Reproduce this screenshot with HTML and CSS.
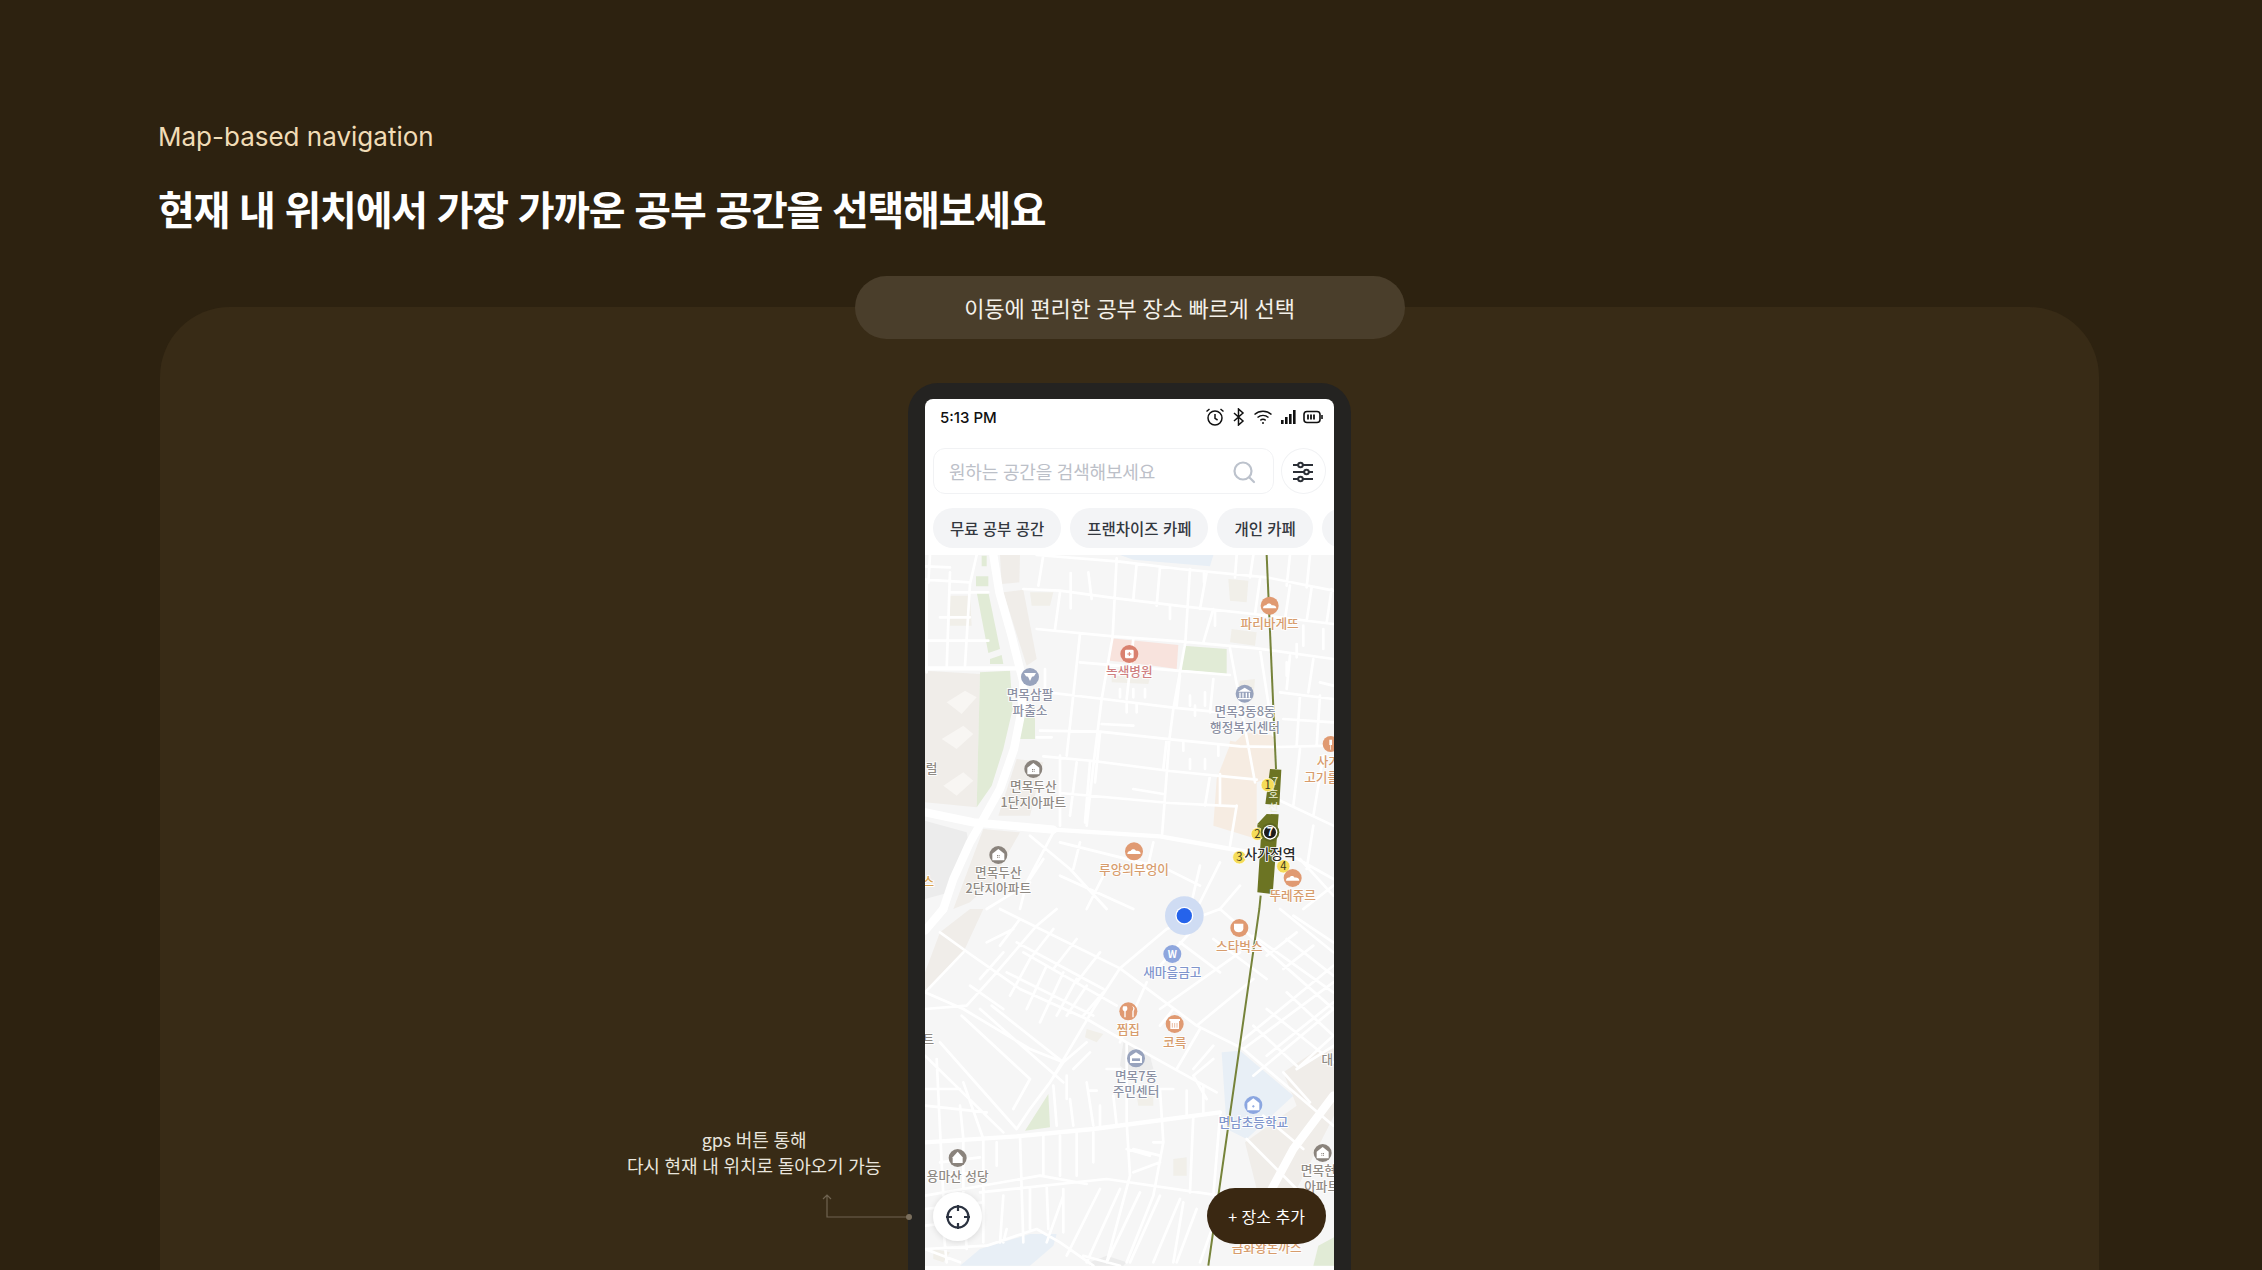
FILE: index.html
```html
<!DOCTYPE html>
<html lang="ko">
<head>
    <meta charset="UTF-8">
    <meta name="viewport" content="width=device-width, initial-scale=1.0">
    <title>Map-based navigation</title>
    <link rel="stylesheet" href="styles.css">
</head>
<body>

    <header class="hero">
        <p class="eyebrow">Map-based navigation</p>
        <h1 class="title">현재 내 위치에서 가장 가까운 공부 공간을 선택해보세요</h1>
    </header>

    <section class="panel">
        <div class="pill">이동에 편리한 공부 장소 빠르게 선택</div>

        <div class="note">gps 버튼 통해<br>다시 현재 내 위치로 돌아오기 가능</div>
        <svg class="note-line" width="100" height="40" viewBox="0 0 100 40" fill="none">
            <path d="M89 29H7V7M3 11l4-4 4 4" stroke="#6f6350" stroke-width="1.2"/>
            <circle cx="89" cy="29" r="3" fill="#7a6e5c"/>
        </svg>

        <div class="phone">
            <div class="screen">
                <div class="status">
                    <span class="time">5:13 PM</span>
                    <div class="status-icons">
                        <svg width="20" height="20" viewBox="0 0 20 20" fill="none" stroke="#111" stroke-width="1.5">
                            <circle cx="10" cy="11" r="7"/>
                            <path d="M10 7v4.4l2.6 1.6M1.5 4.5 4.5 2M18.5 4.5 15.5 2"/>
                        </svg>
                        <svg width="14" height="18" viewBox="0 0 14 18" fill="none" stroke="#111" stroke-width="1.5">
                            <path d="M2 5l9 8-4.5 4V1L11 5 2 13"/>
                        </svg>
                        <svg width="20" height="16" viewBox="0 0 20 16" fill="none" stroke="#111" stroke-width="1.5">
                            <path d="M1.5 5.5c5-4.4 12-4.4 17 0M4.5 8.5c3.300-2.800 7.700-2.800 11 0M7.300 11.300c1.600-1.200 3.800-1.200 5.400 0"/>
                            <circle cx="10" cy="14" r="1" fill="#111" stroke="none"/>
                        </svg>
                        <svg width="16" height="16" viewBox="0 0 16 16" fill="#111">
                            <rect x="1" y="11" width="2.600" height="4"/>
                            <rect x="5" y="8" width="2.600" height="7"/>
                            <rect x="9" y="5" width="2.600" height="10"/>
                            <rect x="13" y="1" width="2.600" height="14"/>
                        </svg>
                        <svg width="20" height="14" viewBox="0 0 20 14" fill="none" stroke="#111">
                            <rect x="1" y="1.500" width="16" height="11" rx="3" stroke-width="1.600"/>
                            <path d="M5 4.500v5M8 4.500v5M11 4.500v5" stroke-width="1.800"/>
                            <path d="M19 5v4" stroke-width="1.600"/>
                        </svg>
                    </div>
                </div>

                <div class="search-row">
                    <div class="search">
                        <span class="placeholder">원하는 공간을 검색해보세요</span>
                        <svg class="search-icon" width="24" height="24" viewBox="0 0 24 24" fill="none" stroke="#bcc2cc" stroke-width="2.200" stroke-linecap="round">
                            <circle cx="11" cy="11" r="8.500"/>
                            <path d="M17.500 17.500 22 22"/>
                        </svg>
                    </div>
                    <div class="filter">
                        <svg width="22" height="22" viewBox="0 0 22 22" fill="none" stroke="#2b2f36" stroke-width="2">
                            <path d="M1 4h5M11 4h10M1 11h11M17 11h4M1 18h5M11 18h10"/>
                            <circle cx="8.500" cy="4" r="2.300"/>
                            <circle cx="14.500" cy="11" r="2.300"/>
                            <circle cx="8.500" cy="18" r="2.300"/>
                        </svg>
                    </div>
                </div>

                <div class="chips">
                    <span class="chip">무료 공부 공간</span>
                    <span class="chip">프랜차이즈 카페</span>
                    <span class="chip">개인 카페</span>
                    <span class="chip chip-cut"></span>
                </div>

                <div class="map">
                    <svg class="map-art" viewBox="15 18 1227 2133" preserveAspectRatio="none">
                        <rect x="15" y="18" width="1227" height="2133" fill="#f6f6f6"/>

                        <!-- areas, upper half -->
                        <path class="a-apt" d="M15 365 180 375 170 775 15 760ZM250 130 310 122 350 330 320 350ZM240 18H300L298 100 245 105ZM290 630 370 640 330 800 235 800ZM190 840 300 850 215 1000 150 1060 100 1080Z"/>
                        <path class="a-grey" d="M15 815 140 850 145 880 90 1030 15 1050Z"/>
                        <path class="a-green" d="M180 370 270 365 278 480 250 600 215 710 170 775ZM170 130H205L240 300 205 312ZM168 82H205V112H168ZM185 20H200V52H185ZM790 290 920 300 920 375 785 362ZM300 500 345 470 345 570H300ZM210 330 245 318 250 345H210Z"/>
                        <path class="a-pink" d="M572 268 775 288 770 360 700 350 570 335Z"/>
                        <path class="a-blue" d="M600 18H880L870 52 640 32Z"/>
                        <path class="a-peach" d="M975 550 1060 560 1065 680 1010 700 1010 870 880 830 890 690 925 600ZM930 575 955 580 950 640 920 640Z"/>
                        <path class="a-lite" d="M90 140H150L155 230H90ZM330 130H400L390 170 335 170ZM925 90 985 95 980 160 930 155ZM960 395 1005 390 1000 450 950 440ZM935 240 1010 250 1005 290 930 280ZM575 380 690 385 685 405 575 400Z"/>
                        <path class="a-chev" d="M80 460 135 425 170 445 125 495ZM65 570 130 530 160 555 110 600ZM70 710 130 670 160 695 110 740Z"/>

                        <!-- areas, lower half -->
                        <g transform="translate(0 1080)">
                            <path class="a-apt" d="M60 70 150 0H190L130 130 15 250 15 190ZM1090 490 1180 430 1242 420V620L1130 840H1010L975 700 1130 590Z"/>
                            <path class="a-green" d="M385 555 390 655 315 665ZM1195 1010 1242 985V1070H1180Z"/>
                            <path class="a-blue" d="M905 430 960 425 1120 560 980 690 920 660ZM120 1070 180 1020 330 975 410 975 400 1010 330 1070Z"/>
                            <path class="a-grey" d="M610 400 690 440 700 480 640 500 600 470ZM510 1060 560 1040 620 1060 610 1070H510Z"/>
                            <path class="a-lite" d="M500 360 550 375 530 400 495 385ZM40 1020 90 1030 70 1060 40 1050ZM650 560H700V590H655ZM760 750 800 745 800 800 760 800Z"/>
                        </g>

                        <!-- roads, upper half -->
                        <path class="road-lg" d="M220 18 238 130 272 250 310 400 306 480 282 600 240 720 190 810 150 880 100 990 70 1080M15 790 160 820 400 842"/>
                        <path class="road-md" d="M400 842 720 862 1000 912 1080 930M15 358H300"/>
                        <path class="road-sm" d="M15 52 90 55M15 92 150 100M350 18 600 38 780 60 1040 85 1240 125M310 120 420 125 590 148 790 172 1000 195 1240 225M350 240 580 262 790 278 1010 298 1240 330M480 340 770 365 930 378M340 425 550 450 760 476 1000 500 1060 505M360 545 540 548 760 572 960 592 1070 594 1240 590M370 622 520 636 750 666 1010 692M420 732 750 762 950 772M1070 750 1240 830M1080 900 1240 990M15 275H130M90 130 150 130 205 130M150 205H60M20 100V370M90 70 80 360M150 105 135 350M305 350 290 600M370 18 355 110M420 130 405 240M480 255 440 620M590 28 578 262 545 450 520 650 500 830M650 45 640 150M720 55 710 170M860 70 840 180M810 60 796 280 760 480 748 572 726 860M1020 90 1005 195M1110 110 1095 210M1175 115 1160 215M1235 120 1220 220M880 180 850 280M640 270 620 450M930 298 985 592 1005 700M540 550 525 700M740 570 730 660M870 680 855 770M1020 300 1060 560M1180 330 1165 430M1110 320 1100 420M950 770 930 890M470 640 450 800M420 620 420 830M510 640 495 820M30 18 25 100M170 18 150 105M950 18 945 85M1000 18 990 85M1110 18 1100 110M1170 18 1160 115M780 380 770 470M880 390 870 490M1140 440 1130 590M1200 440 1190 590M1080 430 1240 450M1090 510 1240 520M1140 600 1120 770M1210 620 1180 800M480 880 460 960M420 880 700 950M700 880 680 970M560 960 500 1080M720 950 840 1010M840 950 810 1080M900 940 830 1080M960 1010 900 1080M1140 930 1240 1040M1180 830 1160 960M1240 1010 1150 1080M400 850 320 1000 300 1080M330 860 450 960 560 1080M200 1080 330 1000M420 980 640 1080M370 930 330 990"/>
                        <!-- short dead ends with round tips -->
                        <path class="road-sm" d="M452 72V178M505 70 515 150M852 70V100M750 170V210M885 185V230M600 420V445M640 420V445M675 420V445M810 440V470M855 430V470M825 470V500M620 465V490M650 465V490M545 525 640 530M790 580V605M895 590V620M810 630V660M855 630V660M640 720 730 735M350 565H395M900 675V765M1200 400 1240 410M1130 285V325M205 275H130M375 360V420M1150 230V290M1210 240V300M1100 340V380"/>

                        <!-- roads, lower half -->
                        <g transform="translate(0 1080)">
                            <path class="road-lg" d="M70 0 15 65M1240 560 1120 720 1050 850"/>
                            <path class="road-md" d="M15 700 290 682 520 660 900 610"/>
                            <path class="road-sm" d="M60 70 150 135 300 240 500 330 620 400 890 550M240 0 600 178 830 350 970 420 1240 650M15 250 130 300M15 300 140 290 230 190 350 50 410 0M130 130 15 250M600 178 520 300 390 520M680 220 600 400M600 178 740 60 900 0M900 0 1240 300M960 130 720 300M1000 210 830 350M1080 0 1240 130M130 300 330 420 430 460 390 520 330 600 290 660M180 300 430 520M260 190 520 320M310 130 590 290M330 150 270 260M380 170 320 300M430 190 360 340M470 210 410 320M500 230 440 320M550 250 490 320M50 450 60 660 70 860M130 520 190 690M15 540H120M15 590 200 610M120 590 130 690M190 690V1000M300 680 310 1000M400 530 410 650M450 570 460 650M520 670V760M620 400 620 640 630 800 560 1060M720 540 730 700 700 860 620 1060M820 620 810 850M500 520 520 650M900 620 880 860M880 450 820 500M820 500 860 570M15 860 360 800 500 825M180 850 560 810 900 860M230 700V770M370 680V800M420 680V800M470 670V800M250 860 240 1000M330 840 330 960M380 830 385 960M430 840 430 970M540 840 440 1040M600 840 500 1060M660 850 560 1060M720 860 630 1060M780 870 700 1060M15 1020 200 1010 350 960 420 1000 520 1070M120 1060 15 1020M1240 220 970 420M1240 300 1000 500M1040 300 1240 460M1100 250 1240 380M1000 350 1130 470M1130 480 1242 410M1090 490 1170 580M1030 620 1150 720M980 690 1130 840M1100 90 1240 200M540 590V650M580 560 590 650M800 545V620M850 530V610M440 500V570M460 480 510 430M510 545 530 545M560 480 600 480M720 540H760M620 720 690 740M125 320 330 510M215 290 430 460M60 400 290 660M15 440 250 670M330 510 280 600M430 460 500 400M300 30 240 110M400 60 330 150M470 90 400 180M540 130 470 220M290 100 550 240M200 100 280 60M150 230 250 300M250 130 180 210M60 760 180 745M60 800 180 790M130 700V850M640 720 720 740M640 790 720 760M1000 80 1240 250M960 400 1240 170M1040 440 1240 280M880 90 1040 210M1130 70 1040 140M1180 110 1090 180M1240 380 1130 480M1120 20 1240 100M780 100 900 190M820 60 720 170M760 300 720 350M840 360 770 480M880 410 820 480M700 700H730M15 950 190 930M15 900 190 880M70 960 80 1060M130 870 140 1020M250 1000 260 960M380 1000 430 860M490 1040 600 1070M790 880 760 1060M830 900 770 1060M890 920 840 1060"/>
                        </g>

                        <!-- subway line -->
                        <path d="M1040 18 1068 660" class="rail"/>
                        <path d="M1022 1040 1018 1080 865 2150" class="rail"/>
                        <path fill="#6c7423" d="M1050 660 1084 662 1078 768 1036 765ZM1040 795 1076 796 1058 1035 1012 1030 1025 830 1012 825Z"/>
                        <path fill="#6c7423" d="M1012 826H1040V850H1012Z"/>
                        <text class="t-rail" x="1066" y="708">7</text>
                        <text class="t-rail" x="1060" y="748">호</text>
                        <text class="t-rail" x="1060" y="785">선</text>

                        <circle class="st-num" cx="1043" cy="708" r="20"/>
                        <circle class="st-num" cx="1012" cy="855" r="19"/>
                        <circle class="st-num" cx="958" cy="925" r="20"/>
                        <circle class="st-num" cx="1090" cy="952" r="20"/>
                        <text class="t-num" x="1043" y="720">1</text>
                        <text class="t-num" x="1012" y="867">2</text>
                        <text class="t-num" x="958" y="937">3</text>
                        <text class="t-num" x="1090" y="964">4</text>
                        <circle cx="1050" cy="850" r="28" fill="#5e6620"/>
                        <circle cx="1050" cy="850" r="22" fill="#fff"/>
                        <circle cx="1050" cy="850" r="18" fill="#1c1c1c"/>
                        <text class="t-seven" x="1050" y="862">7</text>

                        <!-- pins -->
                        <circle class="p-orange" cx="1049" cy="170" r="27"/>
                        <path class="glyph" d="M1029 178c0-8 6-10 10-9 2-7 14-7 16 0 6-2 14 2 14 9Z"/>
                        <circle class="p-red" cx="628" cy="315" r="27"/>
                        <rect class="glyph" x="615" y="302" width="26" height="26" rx="4"/>
                        <path d="M628 309v12M622 315h12" stroke="#d9816f" stroke-width="3"/>
                        <circle class="p-slate" cx="330" cy="384" r="27"/>
                        <path class="glyph" d="M312 372h36l-6 10 -6 1-6 13-6-13-6-1Z"/>
                        <circle class="p-slate" cx="974" cy="434" r="27"/>
                        <path class="glyph" d="M974 416 994 428H954ZM958 431h4v15h-4ZM967 431h4v15h-4ZM977 431h4v15h-4ZM986 431h4v15h-4ZM954 447h40v4h-40Z"/>
                        <circle class="p-brown" cx="340" cy="660" r="27"/>
                        <path class="glyph" d="M340 642 358 656V676H322V656Z"/>
                        <path d="M336 660h3v3h-3ZM341 660h3v3h-3ZM336 665h3v3h-3ZM341 665h3v3h-3Z" fill="#8a837c"/>
                        <circle class="p-brown" cx="235" cy="918" r="27"/>
                        <path class="glyph" d="M235 900 253 914V934H217V914Z"/>
                        <path d="M231 918h3v3h-3ZM236 918h3v3h-3ZM231 923h3v3h-3ZM236 923h3v3h-3Z" fill="#8a837c"/>
                        <circle class="p-orange" cx="642" cy="907" r="27"/>
                        <path class="glyph" d="M622 915c0-8 6-10 10-9 2-7 14-7 16 0 6-2 14 2 14 9Z"/>
                        <circle class="p-orange" cx="1118" cy="987" r="27"/>
                        <path class="glyph" d="M1098 995c0-8 6-10 10-9 2-7 14-7 16 0 6-2 14 2 14 9Z"/>
                        <circle class="p-orange" cx="1232" cy="585" r="24"/>
                        <path class="glyph" d="M1228 572h8v16h-3v14h-2v-14h-3Z"/>

                        <g transform="translate(0 1080)">
                            <circle cx="793" cy="20" r="58" fill="#cfdcf3"/>
                            <circle cx="793" cy="20" r="27" fill="#fff"/>
                            <circle cx="793" cy="20" r="23" fill="#2563eb"/>
                            <circle class="p-orange" cx="958" cy="57" r="27"/>
                            <path class="glyph" d="M942 44h28v14c0 8-6 12-14 12s-14-4-14-12Z"/>
                            <circle class="p-blue" cx="757" cy="135" r="27"/>
                            <text class="t-won" x="757" y="147">W</text>
                            <circle class="p-orange" cx="625" cy="307" r="27"/>
                            <path class="glyph" d="M610 292c-4 6-2 14 3 15v18h4v-18c5-1 7-9 3-15ZM634 292c6 0 8 8 3 14v19h4v-19c5-6 3-14-7-14Z"/>
                            <circle class="p-orange" cx="764" cy="345" r="27"/>
                            <path class="glyph" d="M748 330h32v6h-3v24h-26v-24h-3Z"/>
                            <path d="M757 342v14M764 342v14M771 342v14" stroke="#e09a72" stroke-width="2"/>
                            <circle class="p-slate" cx="648" cy="448" r="27"/>
                            <path class="glyph" d="M630 442 648 430 666 442V462H630Z"/>
                            <path d="M636 448h24v8h-24Z" fill="#98a3bd"/>
                            <circle class="p-lblue" cx="1000" cy="588" r="27"/>
                            <path class="glyph" d="M1000 568 1018 582V604H982V582Z"/>
                            <path d="M1000 588v8M996 592h8" stroke="#8ba6e0" stroke-width="2.500"/>
                            <circle class="p-brown" cx="113" cy="747" r="27"/>
                            <path class="glyph" d="M113 728 128 745V762H98V745Z"/>
                            <circle class="p-brown" cx="1208" cy="732" r="27"/>
                            <path class="glyph" d="M1208 714 1226 728V748H1190V728Z"/>
                            <path d="M1204 732h3v3h-3ZM1209 732h3v3h-3ZM1204 737h3v3h-3ZM1209 737h3v3h-3Z" fill="#8a837c"/>
                        </g>

                        <!-- labels -->
                        <g transform="translate(0 3)">
                            <text class="lb l-orange" x="1049" y="235">파리바게뜨</text>
                            <text class="lb l-red" x="628" y="378">녹색병원</text>
                            <text class="lb l-slate" x="330" y="448">면목삼팔</text>
                            <text class="lb l-slate" x="330" y="495">파출소</text>
                            <text class="lb l-slate" x="975" y="498">면목3동8동</text>
                            <text class="lb l-slate" x="975" y="545">행정복지센터</text>
                            <text class="lb l-brown" x="340" y="722">면목두산</text>
                            <text class="lb l-brown" x="340" y="770">1단지아파트</text>
                            <text class="lb l-brown" x="235" y="982">면목두산</text>
                            <text class="lb l-brown" x="235" y="1028">2단지아파트</text>
                            <text class="lb l-orange" x="642" y="972">루앙의부엉이</text>
                            <text class="lb l-orange" x="1118" y="1050">뚜레쥬르</text>
                            <text class="lb l-orange" x="1225" y="648">사가</text>
                            <text class="lb l-orange" x="1205" y="697">고기를</text>
                            <text class="lb l-brown" x="35" y="670">럴</text>
                            <text class="lb l-yellow" x="25" y="1008">스</text>
                            <text class="lb l-station" x="1050" y="928">사가정역</text>
                        </g>
                        <g transform="translate(0 1083)">
                            <text class="lb l-orange" x="958" y="122">스타벅스</text>
                            <text class="lb l-blue" x="757" y="200">새마을금고</text>
                            <text class="lb l-orange" x="625" y="372">찜집</text>
                            <text class="lb l-orange" x="764" y="410">코륵</text>
                            <text class="lb l-slate" x="648" y="512">면목7동</text>
                            <text class="lb l-slate" x="648" y="558">주민센터</text>
                            <text class="lb l-blue" x="1000" y="650">면남초등학교</text>
                            <text class="lb l-brown" x="1222" y="462">대</text>
                            <text class="lb l-brown" x="113" y="812">용마산 성당</text>
                            <text class="lb l-brown" x="1195" y="795">면목현</text>
                            <text class="lb l-brown" x="1205" y="843">아파트</text>
                            <text class="lb l-brown" x="25" y="403">트</text>
                            <text class="lb l-orange" x="1040" y="1025">금화왕돈까스</text>
                        </g>
                    </svg>

                    <div class="gps">
                        <svg width="26" height="26" viewBox="0 0 26 26" fill="none" stroke="#2b3240" stroke-width="2.200">
                            <circle cx="13" cy="13" r="10.500"/>
                            <path d="M13 1v6M13 19v6M1 13h6M19 13h6"/>
                        </svg>
                    </div>
                    <div class="add-place">+ 장소 추가</div>
                </div>
            </div>
        </div>
    </section>

</body>
</html>
```

FILE: styles.css
```css
html, body{
    height: 1270px;
    overflow: hidden;
}

body{
    margin: 0;
    background-color: #2d2210;
    color: #fff;
    font-family: "Noto Sans CJK KR", "Noto Sans", sans-serif;
}

.hero{
    height: 307px;
    box-sizing: border-box;
    padding: 118px 0 0 158px;
}

.eyebrow{
    margin: 0;
    font-family: "Inter", "Noto Sans", sans-serif;
    font-size: 26px;
    line-height: 38px;
    color: #f1dcb6;
}

.title{
    margin: 27px 0 0;
    font-size: 40px;
    line-height: 50px;
    font-weight: 700;
    letter-spacing: -1.25px;
}

.panel{
    position: relative;
    display: flex;
    flex-direction: column;
    align-items: center;
    margin: 0 163px 0 160px;
    height: 963px;
    background-color: #382b16;
    border-radius: 70px 70px 0 0;
}

.pill{
    display: flex;
    align-items: center;
    justify-content: center;
    width: 550px;
    height: 64px;
    margin-top: -31px;
    padding-bottom: 2px;
    box-sizing: border-box;
    border-radius: 32px;
    background-color: #4a3e2b;
    font-size: 22px;
    letter-spacing: -0.2px;
    color: #f4f1ea;
}

.note{
    position: absolute;
    left: 444px;
    top: 819px;
    width: 300px;
    text-align: center;
    font-size: 18px;
    line-height: 26px;
    letter-spacing: -0.15px;
    color: #e9e5dd;
}

.note-line{
    position: absolute;
    left: 660px;
    top: 881px;
}

.phone{
    width: 443px;
    height: 900px;
    margin-top: 44px;
    box-sizing: border-box;
    padding: 16px 17px 0;
    background-color: #242321;
    border-radius: 30px 30px 0 0;
}

.screen{
    display: flex;
    flex-direction: column;
    height: 100%;
    background-color: #fff;
    border-radius: 8px 8px 0 0;
    overflow: hidden;
}

.status{
    display: flex;
    align-items: center;
    justify-content: space-between;
    height: 34px;
    box-sizing: border-box;
    padding: 2px 11px 0 15px;
}

.time{
    font-family: "Inter", sans-serif;
    font-size: 15px;
    font-weight: 500;
    color: #111;
}

.status-icons{
    display: flex;
    align-items: center;
    gap: 7px;
}

.search-row{
    display: flex;
    gap: 7px;
    margin-top: 15px;
    padding: 0 8px;
}

.search{
    display: flex;
    align-items: center;
    justify-content: space-between;
    width: 341px;
    height: 46px;
    box-sizing: border-box;
    padding: 0 17px 0 15px;
    border: 1px solid #f1f2f4;
    border-radius: 12px;
}

.search-icon{
    margin-top: 2px;
}

.placeholder{
    font-size: 18px;
    letter-spacing: -0.2px;
    color: #bcc0c8;
}

.filter{
    display: flex;
    align-items: center;
    justify-content: center;
    width: 45px;
    height: 46px;
    box-sizing: border-box;
    padding: 2px 2px 0 0;
    border: 1px solid #f1f2f4;
    border-radius: 50%;
}

.chips{
    display: flex;
    gap: 9px;
    height: 40px;
    margin-top: 14px;
    padding-left: 8px;
    overflow: hidden;
}

.chip{
    flex: none;
    display: flex;
    align-items: center;
    padding: 0 17px;
    border-radius: 20px;
    background-color: #f3f4f6;
    font-size: 15.500px;
    font-weight: 500;
    color: #33383f;
    white-space: nowrap;
}

.chip-cut{
    width: 60px;
}

.map{
    position: relative;
    width: 409px;
    height: 711px;
    margin-top: 7px;
}

.map-art{
    display: block;
    width: 100%;
    height: 100%;
}

.a-apt{ fill: #f0ede9; }
.a-grey{ fill: #ececec; }
.a-green{ fill: #e1ebd6; }
.a-pink{ fill: #f8e3dd; }
.a-blue{ fill: #e8eff6; }
.a-peach{ fill: #f6ece2; }
.a-lite{ fill: #f1efe9; }
.a-chev{ fill: #f8f6f3; }

.road-lg, .road-md, .road-sm{
    fill: none;
    stroke: #fff;
    stroke-linecap: round;
    stroke-linejoin: round;
}

.road-lg{ stroke-width: 25; }
.road-md{ stroke-width: 13; }
.road-sm{ stroke-width: 8; }

.rail{
    fill: none;
    stroke: #76833a;
    stroke-width: 6;
}

.st-num{
    fill: #f5dc58;
    stroke: #fff;
    stroke-width: 2;
}

.t-num, .t-seven, .t-rail, .t-won{
    text-anchor: middle;
    font-size: 34px;
}

.t-num{ fill: #3a3a20; }
.t-seven{ fill: #fff; font-weight: 700; }
.t-rail{ fill: #eef0d8; font-size: 32px; }
.t-won{ fill: #fff; font-weight: 700; font-size: 30px; }

.p-orange{ fill: #e09a72; }
.p-red{ fill: #d9816f; }
.p-slate{ fill: #98a3bd; }
.p-brown{ fill: #8a837c; }
.p-blue{ fill: #8ea6dd; }
.p-lblue{ fill: #8ba6e0; }
.glyph{ fill: #fff; }

.lb{
    text-anchor: middle;
    font-size: 38px;
    font-weight: 500;
    stroke: #fff;
    stroke-width: 5;
    paint-order: stroke;
}

.l-orange{ fill: #d79c6c; }
.l-red{ fill: #cf7f7f; }
.l-slate{ fill: #8b90a3; }
.l-brown{ fill: #8f8a84; }
.l-blue{ fill: #7f95cc; }
.l-yellow{ fill: #d9a24d; }
.l-station{ fill: #2b2b2b; font-size: 42px; }

.gps{
    position: absolute;
    left: 8px;
    top: 637px;
    display: flex;
    align-items: center;
    justify-content: center;
    width: 49px;
    height: 49px;
    border-radius: 50%;
    background-color: #fff;
    box-shadow: 0 1px 6px rgba(0, 0, 0, 0.12);
}

.add-place{
    position: absolute;
    left: 282px;
    top: 633px;
    display: flex;
    align-items: center;
    justify-content: center;
    width: 119px;
    height: 56px;
    border-radius: 28px;
    background-color: #3a2812;
    font-size: 16px;
    color: #fff;
}
```
